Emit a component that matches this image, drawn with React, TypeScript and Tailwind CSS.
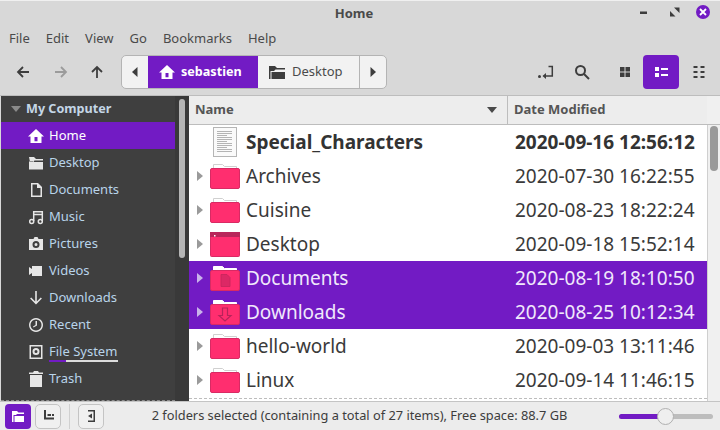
const font = { fontFamily: '"Noto Sans", "Open Sans", sans-serif' };

function Folder({ kind }: { kind?: "desktop" | "doc" | "down" | "sel" }) {
  const selected = kind === "doc" || kind === "down";
  if (kind === "desktop") {
    return (
      <svg width="30" height="25" viewBox="0 0 30 25" className="shrink-0">
        <rect x="0.5" y="0.5" width="29" height="24" rx="1" fill="#ff2e6f" stroke="#d92a64" />
        <rect x="0" y="0" width="30" height="5" fill="#b8265a" />
        <rect x="4" y="3" width="1.5" height="1.5" fill="#fff" />
      </svg>
    );
  }
  return (
    <svg width="30" height="25" viewBox="0 0 30 25" className="shrink-0">
      <path d="M3.5 5V.5h9l2 2h12V5z" fill="#fff" stroke={selected ? "#fff" : "#d0d0d0"} />
      <rect x="0.5" y="4.5" width="29" height="20" rx="1.5" fill="#ff2e6f" stroke="#d92a64" />
      {kind === "doc" && <path d="M11 8.500h6l3 3v9h-9z" fill="#dc2865" stroke="#c4265c" strokeWidth="0.8" />}
      {kind === "down" && <path d="M12.500 8v7.500H9l6 5.500 6-5.500h-3.500V8z" fill="#ff2e6f" stroke="#b8235a" strokeWidth="1.200" />}
    </svg>
  );
}

function Arrow({ selected }: { selected?: boolean }) {
  return (
    <svg width="7" height="10" viewBox="0 0 7 10" className="shrink-0">
      <path d="M0 0l6 5-6 5z" fill={selected ? "#c9b3ea" : "#9a9a9a"} />
    </svg>
  );
}

function TextFile() {
  return (
    <svg width="24" height="30" viewBox="0 0 24 30" className="shrink-0">
      <rect x="0.5" y="0.5" width="23" height="29" fill="#fafafa" stroke="#b5b5b5" />
      {[4, 6, 8, 10, 12, 14, 16, 18, 20, 22, 24].map((y, i) => (
        <path key={y} d={`M4 ${y + 0.5}h${i % 3 === 2 ? 10 : 15}`} stroke="#b4b4b4" strokeWidth="1" />
      ))}
    </svg>
  );
}

const rows: { name: string; date: string; kind?: "desktop" | "doc" | "down"; sel?: boolean }[] = [
  { name: "Archives", date: "2020-07-30 16:22:55" },
  { name: "Cuisine", date: "2020-08-23 18:22:24" },
  { name: "Desktop", date: "2020-09-18 15:52:14", kind: "desktop" },
  { name: "Documents", date: "2020-08-19 18:10:50", kind: "doc", sel: true },
  { name: "Downloads", date: "2020-08-25 10:12:34", kind: "down", sel: true },
  { name: "hello-world", date: "2020-09-03 13:11:46" },
  { name: "Linux", date: "2020-09-14 11:46:15" },
];

const c = "#e6e6e6";
const sideIcons: Record<string, JSX.Element> = {
  Home: <path d="M8 1L0 8.500h2.500V15h11V8.500H16zM6.500 13.200V9h3v4.200z" fill="#fff" fillRule="evenodd" />,
  Desktop: <path d="M1 2h5l2 2h7v1.500H6.500L5 7H2v7.500h13V7H6V6.500H1zM1 2v12.500h1V7z" fill={c} />,
  Documents: <path d="M3 1h7l4 4v10H3zM4.500 2.500v11h8V6H9V2.500z" fill={c} fillRule="evenodd" />,
  Music: (
    <>
      <path d="M5.700 12V2.800h8.600V12M5.700 5.500h8.600" fill="none" stroke={c} strokeWidth="1.500" />
      <circle cx="3.700" cy="12.500" r="2" fill="none" stroke={c} strokeWidth="1.500" />
      <circle cx="12.300" cy="12.500" r="2" fill="none" stroke={c} strokeWidth="1.500" />
    </>
  ),
  Pictures: <path d="M5.500 3L6.500 1h3l1 2H15v11H1V3zM8 5a3.500 3.500 0 1 0 0 7a3.500 3.500 0 1 0 0-7zM8 7a1.500 1.500 0 1 1 0 3a1.500 1.500 0 1 1 0-3z" fill={c} fillRule="evenodd" />,
  Videos: <path d="M1 4l3 2V3h10v10H4v-3l-3 2z" fill={c} />,
  Downloads: <path d="M7.200 1h1.600v10.500l4-4 1.100 1.100L8 14.500 2.100 8.600l1.100-1.100 4 4z" fill={c} />,
  Recent: <path d="M8 1a7 7 0 1 0 .01 0zM8 2.500a5.500 5.500 0 1 1-.01 0zM7.500 4H9v4.500L5.500 10.500 5 9.500l2.500-1.500z" fill={c} fillRule="evenodd" />,
  "File System": <path d="M1.500 1h13v14h-13zM3 2.500v11h10v-11zM8 4a3.500 3.500 0 1 0 0 7a3.500 3.500 0 1 0 0-7zM8 6a1.500 1.500 0 1 1 0 3a1.500 1.500 0 1 1 0-3z" fill={c} fillRule="evenodd" />,
  Trash: <path d="M6 0h4l1 1.500h4V3H1V1.500h4zM2 4h12v12H2z" fill={c} />,
};

function SideRow({ name, children }: { name: string; children?: React.ReactNode }) {
  const active = name === "Home";
  return (
    <div className={`flex h-[27px] items-center pl-[27px] text-[13px] ${active ? "bg-[#721bc4] text-white" : "text-[#b9d4ea]"}`}>
      <svg width="16" height="16" viewBox="0 0 16 16" className="mr-[5px] shrink-0">{sideIcons[name]}</svg>
      <div className="relative">
        {name}
        {children}
      </div>
    </div>
  );
}

function ToolBtn({ children, active }: { children: React.ReactNode; active?: boolean }) {
  return (
    <div className={`flex h-[34px] w-[36px] items-center justify-center rounded-[4px] ${active ? "bg-[#721bc4]" : ""}`}>
      <svg width="16" height="16" viewBox="0 0 16 16">{children}</svg>
    </div>
  );
}

export default function App() {
  return (
    <div style={font} className="flex h-[430px] w-[720px] flex-col overflow-hidden border-t border-[#f0f0f0] bg-[#d8d8d8] text-[#3d3d3d]">
      {/* Title bar */}
      <div className="relative flex h-[26px] shrink-0 items-center justify-center pr-[12px]">
        <span className="text-[13px] font-bold text-[#4a4a4a]">Home</span>
        <div className="absolute right-[10px] top-[4px] flex items-center">
          <svg width="12" height="12" viewBox="0 0 12 12" className="mr-[17px]"><rect x="0" y="5.500" width="7" height="2.500" fill="#3d3d3d" /></svg>
          <svg width="12" height="12" viewBox="0 0 12 12" className="mr-[15px]"><path d="M1 5V10.500H6.500zM5 1.500H10.500V7z" fill="#3d3d3d" /></svg>
          <div className="flex h-[14px] w-[14px] items-center justify-center rounded-full bg-[#721bc4]">
            <svg width="8" height="8" viewBox="0 0 8 8"><path d="M1 1l6 6M7 1L1 7" stroke="#fff" strokeWidth="1.800" /></svg>
          </div>
        </div>
      </div>

      {/* Menu */}
      <div className="flex h-[23px] shrink-0 items-center gap-[16px] pl-[9px] text-[13px] text-[#4a4a4a]">
        <span>File</span>
        <span>Edit</span>
        <span>View</span>
        <span>Go</span>
        <span>Bookmarks</span>
        <span>Help</span>
      </div>

      {/* Toolbar */}
      <div className="flex h-[46px] shrink-0 items-center border-b border-[#bdbdbd] pb-[1px] pl-[5px] pr-[2px]">
        <div className="flex w-[36px] justify-center">
          <svg width="16" height="16" viewBox="0 0 16 16"><path d="M14 8H3M8 3L3 8l5 5" fill="none" stroke="#3d3d3d" strokeWidth="1.800" /></svg>
        </div>
        <div className="ml-[2px] flex w-[36px] justify-center">
          <svg width="16" height="16" viewBox="0 0 16 16"><path d="M2 8h11M8 3l5 5-5 5" fill="none" stroke="#9b9b9b" strokeWidth="1.800" /></svg>
        </div>
        <div className="flex w-[36px] justify-center">
          <svg width="16" height="16" viewBox="0 0 16 16"><path d="M8 14V3M3 8l5-5 5 5" fill="none" stroke="#3d3d3d" strokeWidth="1.800" /></svg>
        </div>
        {/* Path bar */}
        <div className="ml-[6px] flex h-[34px] w-[266px] items-stretch overflow-hidden rounded-[5px] border border-[#b4b4b4] bg-[#f2f2f2] text-[13px]">
          <div className="flex w-[26px] items-center justify-center">
            <svg width="6" height="10" viewBox="0 0 6 10"><path d="M5.500 0v10L0 5z" fill="#3d3d3d" /></svg>
          </div>
          <div className="flex w-[110px] items-center gap-[6px] bg-[#721bc4] pl-[11px] text-[12.6px] font-bold text-white">
            <svg width="16" height="16" viewBox="0 0 16 16">{sideIcons.Home}</svg>
            <span>sebastien</span>
          </div>
          <div className="flex w-[102px] items-center gap-[7px] border-r border-[#b4b4b4] pl-[11px] text-[#4a4a4a]">
            <svg width="16" height="14" viewBox="0 0 16 14"><path d="M0 1h6l2 2h8v1.500H6.500L5 6H1.500v8H0zM2.500 7h13.500v7H2.500z" fill="#3d3d3d" /></svg>
            <span>Desktop</span>
          </div>
          <div className="flex flex-1 items-center justify-center">
            <svg width="6" height="10" viewBox="0 0 6 10"><path d="M.5 0v10L6 5z" fill="#3d3d3d" /></svg>
          </div>
        </div>
        <div className="flex-1" />
        {/* Right tools */}
        <div className="flex items-center">
          <ToolBtn>
            <path d="M10.500 2.500H14.300V12H5.500" fill="none" stroke="#3d3d3d" strokeWidth="1.500" />
            <path d="M8 9v6L4.500 12z" fill="#3d3d3d" />
            <circle cx="1.500" cy="12.500" r="1.500" fill="#3d3d3d" />
          </ToolBtn>
          <ToolBtn>
            <circle cx="6.500" cy="6.500" r="4.500" fill="none" stroke="#3d3d3d" strokeWidth="2" />
            <path d="M10 10l5 5" stroke="#3d3d3d" strokeWidth="2" />
          </ToolBtn>
          <div className="w-[7px]" />
          <ToolBtn>
            <path d="M3 3h4.500v4.500H3zM8.500 3H13v4.500H8.500zM3 8.500h4.500V13H3zM8.500 8.500H13V13H8.500z" fill="#3d3d3d" />
          </ToolBtn>
          <ToolBtn active>
            <path d="M2 3h4v4H2zM2 9h4v4H2zM8 4h7v2H8zM8 10h7v2H8z" fill="#fff" />
          </ToolBtn>
          <div className="w-[3px]" />
          <ToolBtn>
            <path d="M1.500 2h4v2h-4zM1.500 7h4v2h-4zM1.500 12h4v2h-4zM8.500 2h4v2h-4zM8.500 7h4v2h-4zM8.500 12h4v2h-4z" fill="#3d3d3d" />
          </ToolBtn>
        </div>
      </div>

      {/* Main */}
      <div className="flex min-h-0 flex-1">
        {/* Sidebar */}
        <div className="flex w-[189px] shrink-0 border-l border-[#d8d8d8] bg-[#3f3f3f]">
          <div className="w-[174px] shrink-0 border-b border-dashed border-[#8c8c8c]">
            <div className="flex h-[26px] items-center pl-[10px] text-[12.6px] font-bold text-[#c4d6e6]">
              <svg width="10" height="6" viewBox="0 0 10 6" className="mr-[5px]"><path d="M0 0h10L5 6z" fill="#8a8a8a" /></svg>
              My Computer
            </div>
            {["Home", "Desktop", "Documents", "Music", "Pictures", "Videos", "Downloads", "Recent"].map((n) => (
              <SideRow key={n} name={n} />
            ))}
            <SideRow name="File System">
              <div className="absolute bottom-[-1px] left-0 flex h-[2px] w-[69px] bg-[#dcdcdc]">
                <div className="h-full w-[17px] bg-[#721bc4]" />
              </div>
            </SideRow>
            <SideRow name="Trash" />
          </div>
          <div className="flex-1 bg-[#393939] pl-[4px] pt-[3px]">
            <div className="h-[159px] w-[6px] rounded-full bg-[#b5b5b5]" />
          </div>
        </div>

        {/* File list */}
        <div className="flex min-w-0 flex-1 flex-col bg-white">
          <div className="flex h-[29px] shrink-0 border-b border-[#bdbdbd] text-[13px] font-bold text-[#555]">
            <div className="flex w-[319px] items-center justify-between border-r border-[#bdbdbd] bg-[#ededed] pl-[6px] pr-[10px]">
              <span>Name</span>
              <svg width="10" height="6" viewBox="0 0 10 6"><path d="M0 0h10L5 6z" fill="#4a4a4a" /></svg>
            </div>
            <div className="flex w-[199px] items-center bg-[#ededed] pl-[6px]">Date Modified</div>
            <div className="flex-1 bg-[#f0f0f0]" />
          </div>
          <div className="flex min-h-0 flex-1">
            <div className="w-[518px] shrink-0">
              <div className="flex h-[34px] items-center text-[19px] font-bold text-[#333]">
                <div className="w-[57px] pl-[24px]"><TextFile /></div>
                <span className="w-[269px]">Special_Characters</span>
                <span>2020-09-16 12:56:12</span>
              </div>
              {rows.map((r) => (
                <div key={r.name} className={`flex h-[34px] items-center text-[19px] ${r.sel ? "bg-[#721bc4] text-[#f0e8fb]" : "text-[#3a3a3a]"}`}>
                  <div className="flex w-[57px] items-center gap-[6px] pl-[8px]">
                    <Arrow selected={r.sel} />
                    <Folder kind={r.kind} />
                  </div>
                  <span className="w-[269px]">{r.name}</span>
                  <span>{r.date}</span>
                </div>
              ))}
              <div className="mt-[1px] border-t border-dashed border-[#bdbdbd]" />
            </div>
            <div className="flex-1 border-l border-[#cfcfcf] bg-[#f0f0f0] pl-[2px] pt-[1px]">
              <div className="h-[45px] w-[8px] rounded-full bg-[#9a9a9a]" />
            </div>
          </div>
        </div>
      </div>

      {/* Status bar */}
      <div className="flex h-[29px] shrink-0 items-center border-t border-[#c4c4c4] bg-[#ececec] pl-[5px] pr-[7px] text-[12.8px] text-[#3d3d3d]">
        <div className="flex h-[25px] w-[26px] items-center justify-center rounded-[4px] bg-[#721bc4]">
          <svg width="12" height="11" viewBox="0 0 12 11"><path d="M0 0h5l1.500 1.500H12V3H5L4 4H1.500V11H0zM2.500 5H12v6H2.500z" fill="#fff" /></svg>
        </div>
        <div className="ml-[4px] flex h-[25px] w-[26px] items-center justify-center rounded-[5px] border border-[#c4c4c4] bg-[#f0f0f0]">
          <svg width="12" height="12" viewBox="0 0 12 12"><path d="M2 0h2v7.500h8v2H2zM5.500 4H9v2H5.500zM10 4h2v2h-2z" fill="#3d3d3d" /></svg>
        </div>
        <div className="ml-[8px] h-[25px] w-px bg-[#d0d0d0]" />
        <div className="ml-[8px] flex h-[25px] w-[26px] items-center justify-center rounded-[5px] border border-[#c4c4c4] bg-[#f0f0f0]">
          <svg width="10" height="12" viewBox="0 0 10 12"><path d="M2 0h7v12H2v-1.500h5.500v-9H2zM6 3.500v5L2 6z" fill="#3d3d3d" /></svg>
        </div>
        <div className="flex-1 pb-[1px] pr-[4px] text-center">2 folders selected (containing a total of 27 items), Free space: 88.7 GB</div>
        <div className="relative flex h-[16px] w-[94px] items-center">
          <div className="h-[5px] w-full rounded-full bg-[#bdbdbd]" />
          <div className="absolute left-0 h-[5px] w-[44px] rounded-full bg-[#721bc4]" />
          <div className="absolute left-[38px] h-[17px] w-[17px] rounded-full border border-[#b0b0b0] bg-[#efefef]" />
        </div>
      </div>
    </div>
  );
}
